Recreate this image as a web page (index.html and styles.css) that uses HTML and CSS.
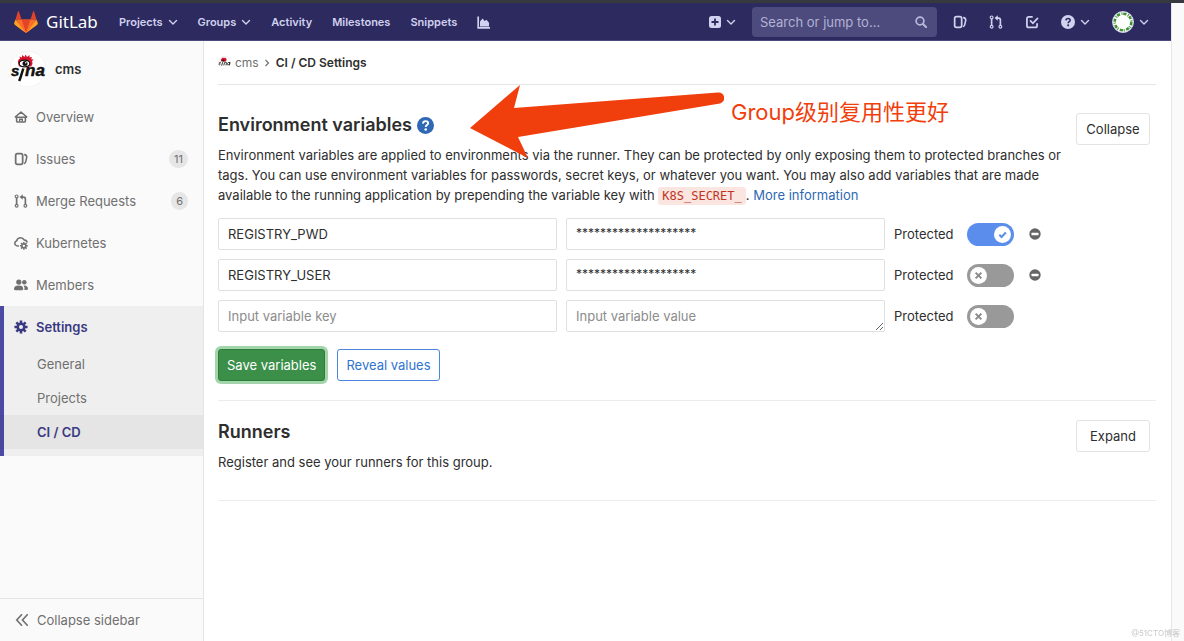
FILE: index.html
```html
<!DOCTYPE html>
<html lang="en">
<head>
<meta charset="utf-8">
<title>CI / CD Settings · cms · GitLab</title>
<link rel="stylesheet" href="styles.css">
</head>
<body>
<svg class="sprite" aria-hidden="true">
  <symbol id="chevron" viewBox="0 0 10 10"><path d="M1.500 3.500 5 7l3.500-3.500" fill="none" stroke="currentColor" stroke-width="1.400" stroke-linecap="round" stroke-linejoin="round"/></symbol>
  <symbol id="issues" viewBox="0 0 16 16"><rect x="1.900" y="1.900" width="8" height="12.200" rx="2" fill="none" stroke="currentColor" stroke-width="2"/><path d="M12.300 3c2 .6 2.500 1.600 2.200 3.400L13.400 11c-.2 1-.6 1.600-1.300 2" fill="none" stroke="currentColor" stroke-width="1.800" stroke-linecap="round"/></symbol>
  <symbol id="merge" viewBox="0 0 16 16"><g fill="none" stroke="currentColor"><g stroke-width="1.300"><circle cx="3" cy="2.800" r="1.600"/><circle cx="3" cy="13.400" r="1.600"/><circle cx="13" cy="13.400" r="1.600"/></g><path d="M3 4.500v7.300M13 11.800V5.500c0-1.300-.8-2-2-2H8.500" stroke-width="1.900"/></g><path d="M10 .3v6.400L6.300 3.500z" fill="currentColor"/></symbol>
  <symbol id="help" viewBox="0 0 16 16"><circle cx="8" cy="8" r="8" fill="currentColor"/><path d="M5.600 6.200c.1-1.500 1.100-2.300 2.500-2.300s2.400.8 2.400 2c0 1.700-2.300 1.700-2.300 3.500" fill="none" stroke="var(--mark)" stroke-width="1.800"/><circle cx="8.200" cy="11.800" r="1.200" fill="var(--mark)"/></symbol>
  <symbol id="gear" viewBox="0 0 16 16"><path d="M8 .5v15M.5 8h15M2.700 2.700l10.600 10.600M13.300 2.700 2.700 13.300" stroke="currentColor" stroke-width="2.900"/><circle cx="8" cy="8" r="5.200" fill="currentColor"/><circle cx="8" cy="8" r="2.300" fill="var(--hole)"/></symbol>
  <symbol id="minus" viewBox="0 0 12 12"><circle cx="6" cy="6" r="5.700" fill="currentColor"/><rect x="2.500" y="4.800" width="7" height="2.400" rx=".5" fill="#fff"/></symbol>
  <symbol id="tick" viewBox="0 0 16 16"><path d="m5 8.200 2.100 2.100 4.100-4.200" fill="none" stroke="currentColor" stroke-width="1.900"/></symbol>
  <symbol id="cross" viewBox="0 0 16 16"><path d="m5.300 5.300 5.400 5.400M10.700 5.300l-5.400 5.400" fill="none" stroke="currentColor" stroke-width="1.900"/></symbol>
</svg>

<div class="window-edge"></div>
<div class="screen">
  <div class="app">
    <header class="navbar">
      <a class="brand" href="#">
        <svg class="tanuki" viewBox="0 0 24 22" aria-hidden="true"><path d="M12 22 .6 13.600 7.500 8.500h9l6.900 5.100z" fill="#fc6d26"/><path d="m12 22 4.500-13.500h-9z" fill="#e24329"/><path d="M12 22 .6 13.600c-.5-.4-.6-1-.4-1.500L1.500 8.500z" fill="#fca326"/><path d="m12 22 11.400-8.400c.5-.4.6-1 .4-1.500l-1.300-3.600z" fill="#fca326"/><path d="M1.500 8.500h6L4.900.6c-.1-.5-.8-.5-1 0zM22.500 8.500h-6L19.100.6c.1-.5.8-.5 1 0z" fill="#e24329"/><path d="M1.500 8.500h6L12 22zM22.500 8.500h-6L12 22z" fill="#fc6d26"/></svg>
        <span>GitLab</span>
      </a>
      <nav class="main-nav">
        <button type="button">Projects <svg class="chev"><use href="#chevron"/></svg></button>
        <button type="button">Groups <svg class="chev"><use href="#chevron"/></svg></button>
        <a href="#">Activity</a>
        <a href="#">Milestones</a>
        <a href="#">Snippets</a>
        <a href="#" aria-label="Analytics"><svg class="ic13" viewBox="0 0 13 13"><path d="M1.200.5v11.300H13" fill="none" stroke="currentColor" stroke-width="1.700"/><path d="M3 10.500V5.500L5.500 2.500l2.300 2.500L9.500 3.800l2.500 3v3.700z" fill="currentColor"/></svg></a>
      </nav>
      <div class="tools">
        <button class="new" type="button" aria-label="New"><svg class="ic12" viewBox="0 0 12 12"><rect width="12" height="12" rx="2.500" fill="currentColor"/><path d="M6 2.500v7M2.500 6h7" stroke="#2c2a5e" stroke-width="1.800"/></svg><svg class="chev"><use href="#chevron"/></svg></button>
        <label class="search"><input type="text" aria-label="Search" placeholder="Search or jump to..."><svg class="ic12" viewBox="0 0 12 12"><circle cx="5" cy="5" r="3.900" fill="none" stroke="currentColor" stroke-width="1.700"/><path d="m8 8 3.200 3.200" stroke="currentColor" stroke-width="2" stroke-linecap="round"/></svg></label>
        <a href="#" aria-label="Issues"><svg class="ic14"><use href="#issues"/></svg></a>
        <a href="#" aria-label="Merge requests"><svg class="ic14"><use href="#merge"/></svg></a>
        <a href="#" aria-label="To-dos"><svg class="ic14" viewBox="0 0 16 16"><path d="M8 2.200H4.200a2 2 0 0 0-2 2v8a2 2 0 0 0 2 2h7.600a2 2 0 0 0 2-2V10" fill="none" stroke="currentColor" stroke-width="2" stroke-linecap="round"/><path d="m6.300 6.800 2.700 2.700 5.300-5.700" fill="none" stroke="currentColor" stroke-width="2" stroke-linecap="round"/></svg></a>
        <button class="help" type="button" aria-label="Help"><svg class="ic14"><use href="#help"/></svg><svg class="chev"><use href="#chevron"/></svg></button>
        <button class="user" type="button" aria-label="Account"><svg class="ic22" viewBox="0 0 22 22"><circle cx="11" cy="11" r="10.500" fill="#fff" stroke="#c9c9e2"/><circle cx="11" cy="11" r="8.300" fill="none" stroke="#3e9130" stroke-width="2.600" stroke-dasharray="3.200 1.500 1 .82"/><circle cx="11" cy="11" r="6.600" fill="#fff"/></svg><svg class="chev"><use href="#chevron"/></svg></button>
      </div>
    </header>

    <div class="body">
      <aside class="sidebar">
        <a class="context" href="#"><svg class="sina" viewBox="0 0 36 36" aria-hidden="true"><circle cx="18" cy="18" r="17.700" fill="#fff" stroke="#f0f0f0" stroke-width=".6"/><path d="M8 12c-.5-2.500.5-3.500 2-4.500L9.500 5.500l2.500 1L12 4l2.500 2 1-2.500L17 6l2.500-2v2.500L22 6l-.8 2.200 2.300.3-1.500 1.700c1 2 .5 3.800-1 5.300H9z" fill="#d5132a"/><ellipse cx="14.500" cy="12.500" rx="5.300" ry="3.400" fill="#fff" stroke="#111" stroke-width="1.200"/><circle cx="15" cy="12.500" r="2.500" fill="#111"/><circle cx="15.800" cy="11.700" r=".8" fill="#fff"/><g font-family="Liberation Sans, sans-serif" font-weight="bold" font-style="italic" fill="#111" stroke="#111" stroke-width=".5"><text x="1" y="25" font-size="15">s</text><text x="15" y="25" font-size="17">na</text></g><path d="m13.300 17.500-2.800 9-1.300 3.500" fill="none" stroke="#111" stroke-width="2.500"/></svg><span>cms</span></a>
        <nav class="side-nav">
          <a class="row" href="#"><svg class="ic14" viewBox="0 0 16 16"><path d="M1 8.300 8 2.500l7 5.800M3 8v4.500c0 .8.500 1.300 1.300 1.300h7.400c.8 0 1.300-.5 1.300-1.300V8M1 8.300h14" fill="none" stroke="currentColor" stroke-width="1.800" stroke-linejoin="round"/><path d="M6.500 13v-2.500h3V13" fill="none" stroke="currentColor" stroke-width="1.600"/></svg>Overview</a>
          <a class="row" href="#"><svg class="ic14"><use href="#issues"/></svg>Issues<span class="count">11</span></a>
          <a class="row" href="#"><svg class="ic14"><use href="#merge"/></svg>Merge Requests<span class="count">6</span></a>
          <a class="row" href="#"><svg class="ic14" viewBox="0 0 16 16"><path d="M5 11.500C2.500 11.500.9 10 .9 8.300c0-1.400.9-2.500 2.200-2.900C3.700 3.200 5.300 2 7.500 2c1.900 0 3.300.9 4 2.400 1.800.2 3 1.200 3.400 2.300" fill="none" stroke="currentColor" stroke-width="1.800" stroke-linecap="round"/><svg x="6.500" y="6.500" width="9.500" height="9.500"><use href="#gear"/></svg></svg>Kubernetes</a>
          <a class="row" href="#"><svg class="ic14" viewBox="0 0 16 16"><g fill="currentColor"><circle cx="5.500" cy="4.700" r="3"/><path d="M0 12.500C0 9.700 2 8.500 5.500 8.500s5 1.200 5 4c0 1.300-.6 1.500-5 1.500S0 13.800 0 12.500z"/><circle cx="11.800" cy="4.900" r="2.600"/><path d="M10.800 8.600c3.500-.3 5.200 1.200 5.200 3.700 0 1.200-.6 1.500-4.200 1.500.5-2 .3-3.700-1-5.200z"/></g></svg>Members</a>
          <div class="group">
            <a class="row current" href="#"><svg class="ic14"><use href="#gear"/></svg>Settings</a>
            <a class="sub" href="#">General</a>
            <a class="sub" href="#">Projects</a>
            <a class="sub selected" href="#">CI / CD</a>
          </div>
        </nav>
        <button class="fold" type="button"><svg class="ic14" viewBox="0 0 16 16"><path d="M7.500 2 2 8l5.500 6M14 2 8.500 8l5.500 6" fill="none" stroke="currentColor" stroke-width="1.900" stroke-linecap="round"/></svg>Collapse sidebar</button>
      </aside>

      <main class="content">
        <nav class="crumbs"><svg class="ic13" viewBox="0 0 36 36" aria-hidden="true"><circle cx="18" cy="18" r="17" fill="#fff" stroke="#e6e6e6" stroke-width="1.500"/><path d="M8 12c-.5-2.500.5-3.500 2-4.500L12 4l2.500 2 1-2.500L17 6l2.500-2L22 6l1.500 2.500c1 2 0 5-2.500 7H9z" fill="#d5132a"/><circle cx="15" cy="12.500" r="3" fill="#111"/><path d="M8 17.500c-5-1-6 3-3 3.500s1 4-3 3M13 17l-3 10M16 26l2.500-8.500c5-1 6 0 4.500 4L22 26M33 18c-5-1-7 1-7.500 4s3 4 6 0l1.500-4-1.500 8" fill="none" stroke="#222" stroke-width="2.500"/></svg><a href="#">cms</a><svg class="angle" viewBox="0 0 8 8"><path d="m2.500 1 3 3-3 3" fill="none" stroke="currentColor" stroke-width="1.200"/></svg><strong>CI / CD Settings</strong></nav>

        <section class="settings">
          <div class="settings-text">
            <h2>Environment variables <a href="#" aria-label="Help"><svg class="ic17"><use href="#help"/></svg></a></h2>
            <p>Environment variables are applied to environments via the runner. They can be protected by only exposing them to protected branches or tags. You can use environment variables for passwords, secret keys, or whatever you want. You may also add variables that are made available to the running application by prepending the variable key with <code>K8S_SECRET_</code>. <a href="#">More information</a></p>
            <form class="variables">
              <div class="variable">
                <input class="field" type="text" aria-label="Variable key" value="REGISTRY_PWD">
                <textarea class="field masked" rows="1" aria-label="Variable value">********************</textarea>
                <label class="protect"><span>Protected</span><span class="switch"><input type="checkbox" checked><svg><use href="#tick"/></svg></span></label>
                <button class="remove" type="button" aria-label="Remove variable"><svg class="ic12"><use href="#minus"/></svg></button>
              </div>
              <div class="variable">
                <input class="field" type="text" aria-label="Variable key" value="REGISTRY_USER">
                <textarea class="field masked" rows="1" aria-label="Variable value">********************</textarea>
                <label class="protect"><span>Protected</span><span class="switch"><input type="checkbox"><svg><use href="#cross"/></svg></span></label>
                <button class="remove" type="button" aria-label="Remove variable"><svg class="ic12"><use href="#minus"/></svg></button>
              </div>
              <div class="variable">
                <input class="field" type="text" aria-label="Variable key" placeholder="Input variable key">
                <textarea class="field" rows="1" aria-label="Variable value" placeholder="Input variable value"></textarea>
                <label class="protect"><span>Protected</span><span class="switch"><input type="checkbox"><svg><use href="#cross"/></svg></span></label>
              </div>
              <div class="actions">
                <button class="btn save" type="button">Save variables</button>
                <button class="btn reveal" type="button">Reveal values</button>
              </div>
            </form>
          </div>
          <button class="btn toggle" type="button">Collapse</button>
          <div class="note">
            <svg viewBox="0 0 254 76" aria-hidden="true"><path d="M0 43 50 0 44 23 248 7.500a5.600 5.600 0 0 1 2 11L48 52l10 21z" fill="#f03e0c"/></svg>
            <span>Group级别复用性更好</span>
          </div>
        </section>

        <section class="settings">
          <div class="settings-text">
            <h2>Runners</h2>
            <p>Register and see your runners for this group.</p>
          </div>
          <button class="btn toggle" type="button">Expand</button>
        </section>
      </main>
    </div>
  </div>
  <div class="gutter"></div>
</div>
<div class="watermark">@51CTO博客</div>
</body>
</html>
```

FILE: styles.css
```css
* { box-sizing: border-box; }

body {
  margin: 0;
  min-height: 100vh;
  display: flex;
  flex-direction: column;
  background: #fff;
  color: #2e2e2e;
  font: 13px/20px Inter, "Noto Sans CJK SC", sans-serif;
}

a { color: inherit; text-decoration: none; }
button { font: inherit; color: inherit; background: none; border: 0; padding: 0; cursor: pointer; }
svg { display: block; flex: none; }
.sprite { position: absolute; width: 0; height: 0; }

.chev { width: 10px; height: 10px; }
.ic12 { width: 12px; height: 12px; }
.ic13 { width: 13px; height: 13px; }
.ic14 { width: 14px; height: 14px; }
.ic17 { width: 17px; height: 17px; }
.ic22 { width: 22px; height: 22px; }

.window-edge { height: 3px; background: #36393d; }
.screen { flex: 1; display: flex; }
.app { flex: 1; min-width: 0; display: flex; flex-direction: column; }
.gutter { width: 13px; background: #fafafa; border-left: 1px solid #e6e6e6; }

/* Top bar */
.navbar {
  height: 38px;
  display: flex;
  align-items: center;
  padding: 1px 22px 0 14px;
  background: #2c2a5e;
  border-bottom: 1px solid #4b4a7a;
  color: #d1d1f0;
}
.brand { display: flex; align-items: center; gap: 8px; width: 105px; color: #fff; font: 17px/24px "Noto Sans", sans-serif; }
.tanuki { width: 24px; height: 22px; }
.main-nav { display: flex; align-items: center; gap: 20px; font-size: 11px; font-weight: 600; }
.main-nav button { display: flex; align-items: center; gap: 5px; }
.tools { margin-left: auto; display: flex; align-items: center; gap: 22px; }
.tools button { display: flex; align-items: center; gap: 5px; }
.new { margin-right: -6px; }
.help { --mark: #2c2a5e; }
.search {
  width: 185px;
  height: 30px;
  display: flex;
  align-items: center;
  padding: 0 10px 0 8px;
  margin-right: -6px;
  border-radius: 4px;
  background: #4d4b7d;
  color: #b9b8da;
}
.search input { flex: 1; min-width: 0; padding: 0; border: 0; background: none; font: inherit; color: inherit; }
.search input::placeholder { color: #b3b2d4; }

/* Sidebar */
.body { flex: 1; display: flex; }
.sidebar {
  width: 204px;
  display: flex;
  flex-direction: column;
  background: #fafafa;
  border-right: 1px solid #e4e4e4;
  color: #707070;
}
.context { height: 55px; display: flex; align-items: center; gap: 9px; padding-left: 10px; color: #2e2e2e; font-weight: 600; }
.sina { width: 36px; height: 36px; }
.side-nav { --hole: #fafafa; flex: 1; }
.row { height: 42px; display: flex; align-items: center; gap: 8px; padding: 0 15px 0 14px; }
.count { margin-left: auto; padding: 0 5px; border-radius: 10px; background: #e6e6e6; font-size: 11px; line-height: 18px; }
.group { --hole: #efefef; padding-bottom: 7px; background: #efefef; box-shadow: inset 4px 0 #4b4ba3; }
.current { height: 41px; color: #393982; font-weight: 600; }
.sub { display: block; padding: 7px 0 7px 37px; }
.selected { background: rgba(0, 0, 0, .04); color: #393982; font-weight: 600; }
.fold { height: 43px; display: flex; align-items: center; gap: 8px; padding-left: 15px; border-top: 1px solid #e5e5e5; }

/* Page */
.content { flex: 1; min-width: 0; padding: 0 15px 0 14px; }
.crumbs { height: 44px; display: flex; align-items: center; gap: 4px; border-bottom: 1px solid #e5e5e5; font-size: 12px; color: #707070; }
.crumbs strong { margin-left: 1px; color: #2e2e2e; font-weight: 600; }
.angle { width: 8px; height: 8px; }

.settings { position: relative; display: flex; align-items: flex-start; gap: 12px; padding: 28px 6px 19px 0; border-bottom: 1px solid #ececec; }
.settings + .settings { padding-top: 19px; padding-bottom: 28px; }
.settings-text { flex: 1; min-width: 0; }
h2 { display: flex; align-items: center; gap: 5px; margin: 0 0 8px; font-size: 18px; line-height: 24px; font-weight: 600; }
h2 a { color: #2f68b4; --mark: #fff; }
p { margin: 0; }
p a { color: #2f68b4; }
code { padding: 2px 4px; border-radius: 3px; background: #fbe5e1; color: #c0341d; font: 12px/16px "DejaVu Sans Mono", monospace; }

.btn { height: 32px; padding: 0 8px; border: 1px solid #e3e3e3; border-radius: 3px; background: #fff; }
.toggle { width: 74px; padding: 0; }
.save { background: #3b8f49; border-color: #2f7d3c; color: #fff; box-shadow: 0 0 0 3px #a2d5aa; }
.reveal { border-color: #4a85dd; color: #2f74d0; }
.actions { display: flex; gap: 12px; margin-top: 8px; }

.variables { display: flex; flex-direction: column; gap: 9px; max-width: 832px; margin-top: 13px; }
.variable { display: grid; grid-template-columns: 338fr 318fr 120px 27px; column-gap: 9px; align-items: center; }
.field { width: 100%; height: 32px; margin: 0; padding: 5px 9px; border: 1px solid #e0e0e0; border-radius: 2px; background: #fff; font: inherit; color: inherit; }
textarea.field { display: block; overflow: hidden; }
.masked.field { resize: none; font-size: 12px; line-height: 18px; }
.field::placeholder { color: #8c8c8c; }
.protect { display: flex; align-items: center; justify-content: space-between; }
.switch { position: relative; width: 47px; height: 23px; }
.switch input { appearance: none; display: block; width: 100%; height: 100%; margin: 0; border-radius: 12px; background: #999; }
.switch svg { position: absolute; top: 3px; left: 3px; width: 17px; height: 17px; border-radius: 50%; background: #fff; color: #8c8c8c; }
.switch input:checked { background: #5b8eec; }
.switch input:checked + svg { left: 27px; color: #5b8eec; }
.remove { padding-left: 6px; color: #666; }

/* Annotation drawn over the page */
.note { position: absolute; top: 0; left: 252px; display: flex; align-items: flex-start; gap: 7px; color: #f03e0c; font-size: 22px; line-height: 54px; pointer-events: none; }
.note svg { width: 254px; height: 76px; }
.watermark { position: fixed; right: 4px; bottom: 1px; color: #c8c8c8; font-size: 8px; line-height: 14px; }
```
